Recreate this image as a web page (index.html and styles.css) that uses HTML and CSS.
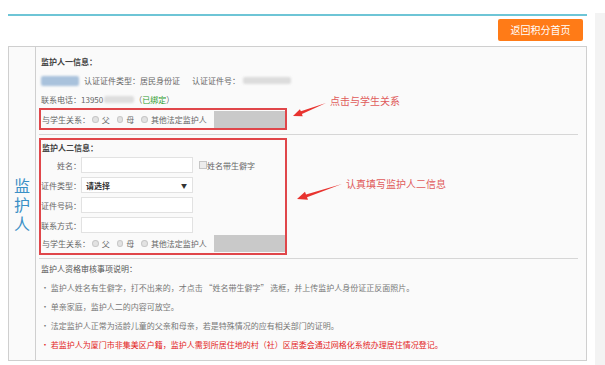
FILE: index.html
```html
<!DOCTYPE html>
<html lang="zh">
<head>
<meta charset="utf-8">
<link rel="stylesheet" href="styles.css">
</head>
<body>
<div class="layout">
  <div class="main">
    <div class="topline"></div>
    <div class="toolbar"><a class="btn-back">返回积分首页</a></div>
    <div class="box">
      <div class="side-label"><span class="vtext">监护人</span></div>
      <div class="content">
        <div class="title r1">监护人一信息：</div>
        <div class="row r2"><span class="blur blur-name"></span><span class="gap6"></span>认证证件类型：居民身份证<span class="gap12"></span>认证证件号：<span class="blur blur-id"></span></div>
        <div class="row r3">联系电话：13950<span class="blur blur-phone"></span>（<span class="green">已绑定</span>）</div>
        <div class="redbox rel1">
          <span class="lbl">与学生关系：</span>
          <span class="radio"></span><span class="opt">父</span>
          <span class="radio"></span><span class="opt">母</span>
          <span class="radio"></span><span class="opt">其他法定监护人</span>
          <span class="graybox"></span>
        </div>
        <div class="divider"></div>
        <div class="redbox form2">
          <div class="title t2">监护人二信息：</div>
          <div class="frow first"><span class="flbl">姓名：</span><span class="input"></span><span class="check"></span><span class="chk-text">姓名带生僻字</span></div>
          <div class="frow"><span class="flbl">证件类型：</span><span class="input select"><span class="sel-text">请选择</span><span class="caret">▼</span></span></div>
          <div class="frow"><span class="flbl">证件号码：</span><span class="input"></span></div>
          <div class="frow"><span class="flbl">联系方式：</span><span class="input"></span></div>
          <div class="frow rel2">
            <span class="lbl">与学生关系：</span>
            <span class="radio"></span><span class="opt">父</span>
            <span class="radio"></span><span class="opt">母</span>
            <span class="radio"></span><span class="opt">其他法定监护人</span>
            <span class="graybox"></span>
          </div>
        </div>
        <div class="divider d2"></div>
        <div class="notes">
          <div class="note-title">监护人资格审核事项说明：</div>
          <div class="note">• 监护人姓名有生僻字，打不出来的，才点击 “姓名带生僻字” 选框，并上传监护人身份证正反面照片。</div>
          <div class="note">• 单亲家庭，监护人二的内容可放空。</div>
          <div class="note">• 法定监护人正常为适龄儿童的父亲和母亲，若是特殊情况的应有相关部门的证明。</div>
          <div class="note red">• 若监护人为厦门市非集美区户籍，监护人需到所居住地的村（社）区居委会通过网格化系统办理居住情况登记。</div>
        </div>
      </div>
    </div>
  </div>
  <div class="strip"></div>
</div>
<div class="anno anno1">点击与学生关系</div>
<div class="anno anno2">认真填写监护人二信息</div>
<svg class="arrows" width="605" height="365" viewBox="0 0 605 365">
  <polygon points="293,116 302.7,116.2 301.9,114.1 326,103 300.9,111.3 299.9,109.2" fill="#e8332f"/>
  <polygon points="297,199 308,199.8 307,197.2 342,184 306,194.4 305,191.8" fill="#e8332f"/>
</svg>
</body>
</html>
```
FILE: styles.css
```css
* { box-sizing: border-box; }
html, body { margin: 0; padding: 0; background: #fff; }
body {
  font-family: "Noto Sans CJK SC", "Noto Sans", sans-serif;
  font-size: 8px;
  color: #666;
  width: 605px;
  height: 365px;
  overflow: hidden;
  position: relative;
}
.layout { display: flex; gap: 8px; }
.main { width: 587px; padding: 14px 0 0 8px; }
.strip { flex: 1; background: #f3f3f3; margin-top: 13px; height: 352px; }
.topline { height: 2px; background: #6ec5d6; }
.toolbar { display: flex; justify-content: flex-end; padding: 3px 4px 0 0; height: 30px; }
.btn-back {
  width: 85px; height: 22px; background: #ff7b17; color: #fff;
  border-radius: 2px; font-size: 10px; line-height: 22px; text-align: center;
}
.box {
  border: 1px solid #cfcfcf; background: #fafafa;
  display: grid; grid-template-columns: 27px 1fr;
  height: 315px;
}
.side-label {
  border-right: 1px solid #cfcfcf;
  display: flex; align-items: center; justify-content: center;
  padding-top: 6px;
}
.vtext {
  writing-mode: vertical-rl;
  font-size: 16px; line-height: 18px; letter-spacing: 3px;
  color: #3a90c6;
}
.content { padding: 6px 7px 0 3px; }
.title { font-weight: bold; color: #444; }
.r1 { height: 18px; line-height: 18px; padding-left: 2px; }
.row { display: flex; align-items: center; padding-left: 2px; white-space: nowrap; }
.r2 { height: 19px; }
.r3 { height: 18px; }
.blur { display: inline-block; filter: blur(1.2px); border-radius: 2px; }
.blur-name { width: 38px; height: 10px; background: #a9c2dc; }
.blur-id { width: 48px; height: 7px; background: #dcdcdc; margin-left: 3px; }
.blur-phone { width: 30px; height: 7px; background: #dedede; margin-left: 1px; }
.gap6 { display: inline-block; width: 5px; }
.gap12 { display: inline-block; width: 12px; }
.green { color: #2c9a2c; }
.redbox { border: 2px solid #e0464a; width: 248px; }
.rel1 { display: flex; align-items: center; height: 22px; padding-left: 1px; white-space: nowrap; }
.lbl { margin-right: 2px; }
.radio {
  display: inline-block; width: 7px; height: 7px; border-radius: 50%;
  background: #e2e2e2; border: 1px solid #c8c8c8; margin-right: 3px;
}
.opt { margin-right: 7px; }
.graybox { width: 77px; height: 17px; background: #c9c9c9; margin-left: auto; margin-right: 0; }
.divider { border-top: 1px solid #d6d6d6; margin: 4px 0 3px 0; width: 539px; }
.form2 { height: 117px; }
.t2 { height: 16px; line-height: 16px; padding-left: 1px; }
.frow { display: flex; align-items: center; height: 16px; margin-top: 4px; white-space: nowrap; }
.frow.first { margin-top: 1px; }
.flbl { width: 40px; text-align: right; }
.input { width: 112px; height: 16px; background: #fff; border: 1px solid #e2e2e2; }
.select { display: flex; align-items: center; justify-content: space-between; padding: 0 5px 0 4px; color: #333; }
.sel-text { font-weight: bold; color: #333; }
.caret { font-size: 6px; color: #333; }
.check { width: 8px; height: 8px; border: 1px solid #c6c6c6; background: #ececec; margin-left: 6px; }
.rel2 { height: 17px; margin-top: 2px; }
.rel2 .lbl { margin-left: 1px; }
.d2 { margin-top: 3px; margin-bottom: 0; }
.notes { padding-left: 2px; }
.note-title, .note { height: 19px; line-height: 19px; white-space: nowrap; }
.note-title { color: #555; }
.note { color: #777; }
.note.red { color: #e32424; }
.anno { position: absolute; font-size: 10px; color: #e05a5a; line-height: 12px; white-space: nowrap; }
.anno1 { left: 330px; top: 95px; }
.anno2 { left: 346px; top: 178px; }
.arrows { position: absolute; left: 0; top: 0; pointer-events: none; }
```
